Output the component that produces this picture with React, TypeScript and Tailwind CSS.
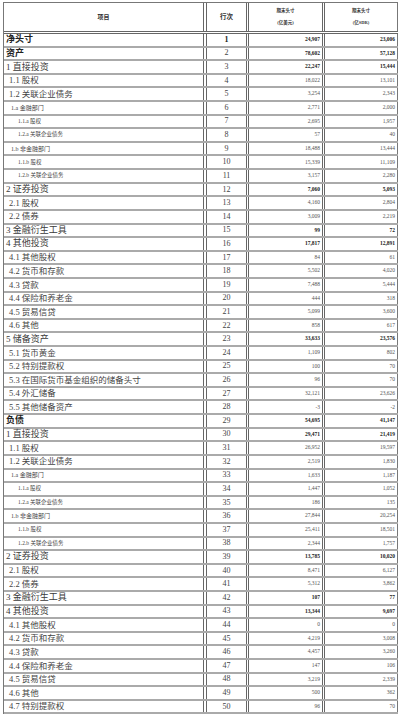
import React from 'react'

type Row = {
  label: string
  no: number
  usd: string
  sdr: string
  lv: 0 | 1 | 2 | 3 | 4
  bold?: boolean
}

// lv: 0 = 净头寸/资产/负债, 1 = 一级项目, 2 = 二级, 3 = 部门, 4 = 部门下细项
const rows: Row[] = [
  { label: '净头寸', no: 1, usd: '24,907', sdr: '23,006', lv: 0, bold: true },
  { label: '资产', no: 2, usd: '78,602', sdr: '57,128', lv: 0, bold: true },
  { label: '1 直接投资', no: 3, usd: '22,247', sdr: '15,444', lv: 1, bold: true },
  { label: '1.1 股权', no: 4, usd: '18,022', sdr: '13,101', lv: 2 },
  { label: '1.2 关联企业债务', no: 5, usd: '3,254', sdr: '2,343', lv: 2 },
  { label: '1.a 金融部门', no: 6, usd: '2,771', sdr: '2,000', lv: 3 },
  { label: '1.1.a 股权', no: 7, usd: '2,695', sdr: '1,957', lv: 4 },
  { label: '1.2.a 关联企业债务', no: 8, usd: '57', sdr: '40', lv: 4 },
  { label: '1.b 非金融部门', no: 9, usd: '18,488', sdr: '13,444', lv: 3 },
  { label: '1.1.b 股权', no: 10, usd: '15,339', sdr: '11,109', lv: 4 },
  { label: '1.2.b 关联企业债务', no: 11, usd: '3,157', sdr: '2,280', lv: 4 },
  { label: '2 证券投资', no: 12, usd: '7,060', sdr: '5,093', lv: 1, bold: true },
  { label: '2.1 股权', no: 13, usd: '4,160', sdr: '2,804', lv: 2 },
  { label: '2.2 债券', no: 14, usd: '3,009', sdr: '2,219', lv: 2 },
  { label: '3 金融衍生工具', no: 15, usd: '99', sdr: '72', lv: 1, bold: true },
  { label: '4 其他投资', no: 16, usd: '17,817', sdr: '12,891', lv: 1, bold: true },
  { label: '4.1 其他股权', no: 17, usd: '84', sdr: '61', lv: 2 },
  { label: '4.2 货币和存款', no: 18, usd: '5,502', sdr: '4,020', lv: 2 },
  { label: '4.3 贷款', no: 19, usd: '7,488', sdr: '5,444', lv: 2 },
  { label: '4.4 保险和养老金', no: 20, usd: '444', sdr: '318', lv: 2 },
  { label: '4.5 贸易信贷', no: 21, usd: '5,099', sdr: '3,600', lv: 2 },
  { label: '4.6 其他', no: 22, usd: '858', sdr: '617', lv: 2 },
  { label: '5 储备资产', no: 23, usd: '33,633', sdr: '23,576', lv: 1, bold: true },
  { label: '5.1 货币黄金', no: 24, usd: '1,109', sdr: '802', lv: 2 },
  { label: '5.2 特别提款权', no: 25, usd: '100', sdr: '70', lv: 2 },
  { label: '5.3 在国际货币基金组织的储备头寸', no: 26, usd: '96', sdr: '70', lv: 2 },
  { label: '5.4 外汇储备', no: 27, usd: '32,121', sdr: '23,626', lv: 2 },
  { label: '5.5 其他储备资产', no: 28, usd: '-3', sdr: '-2', lv: 2 },
  { label: '负债', no: 29, usd: '54,695', sdr: '41,147', lv: 0, bold: true },
  { label: '1 直接投资', no: 30, usd: '29,471', sdr: '21,419', lv: 1, bold: true },
  { label: '1.1 股权', no: 31, usd: '26,952', sdr: '19,597', lv: 2 },
  { label: '1.2 关联企业债务', no: 32, usd: '2,519', sdr: '1,830', lv: 2 },
  { label: '1.a 金融部门', no: 33, usd: '1,633', sdr: '1,187', lv: 3 },
  { label: '1.1.a 股权', no: 34, usd: '1,447', sdr: '1,052', lv: 4 },
  { label: '1.2.a 关联企业债务', no: 35, usd: '186', sdr: '135', lv: 4 },
  { label: '1.b 非金融部门', no: 36, usd: '27,844', sdr: '20,254', lv: 3 },
  { label: '1.1.b 股权', no: 37, usd: '25,411', sdr: '18,501', lv: 4 },
  { label: '1.2.b 关联企业债务', no: 38, usd: '2,344', sdr: '1,757', lv: 4 },
  { label: '2 证券投资', no: 39, usd: '13,785', sdr: '10,020', lv: 1, bold: true },
  { label: '2.1 股权', no: 40, usd: '8,471', sdr: '6,127', lv: 2 },
  { label: '2.2 债券', no: 41, usd: '5,312', sdr: '3,862', lv: 2 },
  { label: '3 金融衍生工具', no: 42, usd: '107', sdr: '77', lv: 1, bold: true },
  { label: '4 其他投资', no: 43, usd: '13,344', sdr: '9,697', lv: 1, bold: true },
  { label: '4.1 其他股权', no: 44, usd: '0', sdr: '0', lv: 2 },
  { label: '4.2 货币和存款', no: 45, usd: '4,219', sdr: '3,008', lv: 2 },
  { label: '4.3 贷款', no: 46, usd: '4,457', sdr: '3,260', lv: 2 },
  { label: '4.4 保险和养老金', no: 47, usd: '147', sdr: '106', lv: 2 },
  { label: '4.5 贸易信贷', no: 48, usd: '3,219', sdr: '2,339', lv: 2 },
  { label: '4.6 其他', no: 49, usd: '500', sdr: '362', lv: 2 },
  { label: '4.7 特别提款权', no: 50, usd: '96', sdr: '70', lv: 2 },
]

const labelCls: Record<Row['lv'], string> = {
  0: 'pl-[2px] text-[9px] font-bold text-[#222]',
  1: 'pl-[2px] text-[9px] text-[#3a3a3a]',
  2: 'pl-[5px] text-[8.5px] text-[#444]',
  3: 'pl-[7px] text-[6px] text-[#444]',
  4: 'pl-[14px] text-[5.5px] text-[#444]',
}

const serif = "font-['Liberation_Serif','Noto_Sans_CJK_SC',serif]"

export default function App() {
  return (
    <div className={`w-[400px] h-[718px] bg-white pt-[2px] pl-[3px] text-[#333] ${serif}`}>
      <div className="w-[395px] border-l border-t border-[#777]">
        {/* header */}
        <div className="grid grid-cols-[203px_42px_76px_1fr] h-[31px] border-b-[3px] border-double border-[#666]">
          <div className="flex items-center justify-center border-r-[4px] border-double border-[#666] text-[6px] font-bold">
            项目
          </div>
          <div className="flex items-center justify-center border-r-[3px] border-double border-[#666] text-[6.5px] font-bold">
            行次
          </div>
          <div className="flex flex-col items-center justify-center gap-[7px] border-r-[3px] border-double border-[#666] text-[4.5px] font-bold leading-none">
            <span>期末头寸</span>
            <span>(亿美元)</span>
          </div>
          <div className="flex flex-col items-center justify-center gap-[7px] border-r border-[#777] text-[4.5px] font-bold leading-none">
            <span>期末头寸</span>
            <span>(亿SDR)</span>
          </div>
        </div>

        {rows.map((r) => (
          <div
            key={r.no}
            className="grid grid-cols-[203px_42px_76px_1fr] h-[13.62px] border-b-2 border-[#aaa]"
          >
            <div
              className={`flex items-center whitespace-nowrap leading-none border-r-[4px] border-double border-[#666] ${labelCls[r.lv]}`}
            >
              {r.label}
            </div>
            <div
              className={`flex items-center justify-center leading-none border-r-[3px] border-double border-[#666] text-[8px] ${
                r.no === 1 ? 'font-bold text-[#222]' : 'text-[#444]'
              }`}
            >
              {r.no}
            </div>
            <div
              className={`flex items-center justify-end pr-[2px] leading-none border-r-[3px] border-double border-[#666] text-[5.5px] ${
                r.bold ? 'font-bold text-[#222]' : 'text-[#555]'
              }`}
            >
              {r.usd}
            </div>
            <div
              className={`flex items-center justify-end pr-[2px] leading-none border-r border-[#777] text-[5.5px] ${
                r.bold ? 'font-bold text-[#222]' : 'text-[#555]'
              }`}
            >
              {r.sdr}
            </div>
          </div>
        ))}
      </div>
    </div>
  )
}
